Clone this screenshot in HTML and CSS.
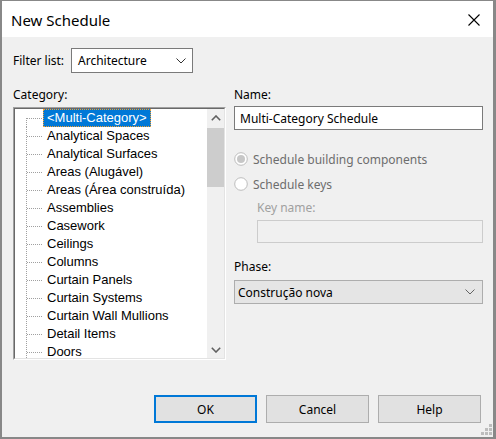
FILE: index.html
```html
<!DOCTYPE html>
<html>
<head>
<meta charset="utf-8">
<link rel="stylesheet" href="styles.css">
</head>
<body>
<div class="window">
  <div class="titlebar">
    <span class="title">New Schedule</span>
    <svg class="close" width="12" height="12" viewBox="0 0 12 12"><path d="M0.5 0.5 L11.5 11.5 M11.5 0.5 L0.5 11.5" stroke="#000" stroke-width="1.1" fill="none"/></svg>
  </div>
  <div class="content">
    <div class="filter-row">
      <span class="filter-label">Filter list:</span>
      <div class="combo combo-white">
        <span>Architecture</span>
        <svg class="chev" width="10" height="6" viewBox="0 0 10 6"><path d="M0.5 0.5 L5 5 L9.5 0.5" stroke="#333" stroke-width="1" fill="none"/></svg>
      </div>
    </div>
    <div class="columns">
      <div class="left">
        <div class="label">Category:</div>
        <div class="listbox">
          <div class="listbox-inner">
            <div class="tree">
              <div class="row first"><span class="item sel">&lt;Multi-Category&gt;</span></div>
              <div class="row"><span class="item">Analytical Spaces</span></div>
              <div class="row"><span class="item">Analytical Surfaces</span></div>
              <div class="row"><span class="item">Areas (Alugável)</span></div>
              <div class="row"><span class="item">Areas (Área construída)</span></div>
              <div class="row"><span class="item">Assemblies</span></div>
              <div class="row"><span class="item">Casework</span></div>
              <div class="row"><span class="item">Ceilings</span></div>
              <div class="row"><span class="item">Columns</span></div>
              <div class="row"><span class="item">Curtain Panels</span></div>
              <div class="row"><span class="item">Curtain Systems</span></div>
              <div class="row"><span class="item">Curtain Wall Mullions</span></div>
              <div class="row"><span class="item">Detail Items</span></div>
              <div class="row last"><span class="item">Doors</span></div>
            </div>
            <div class="scrollbar">
              <div class="sb-btn"><svg width="10" height="6" viewBox="0 0 10 6"><path d="M0.8 5.2 L5 1 L9.2 5.2" stroke="#606060" stroke-width="1.6" fill="none"/></svg></div>
              <div class="sb-track"><div class="sb-thumb"></div></div>
              <div class="sb-btn"><svg width="10" height="6" viewBox="0 0 10 6"><path d="M0.8 0.8 L5 5 L9.2 0.8" stroke="#606060" stroke-width="1.6" fill="none"/></svg></div>
            </div>
          </div>
        </div>
      </div>
      <div class="right">
        <div class="label name-label">Name:</div>
        <div class="textbox">Multi-Category Schedule</div>
        <div class="radio-row r1">
          <svg width="14" height="14" viewBox="0 0 14 14"><circle cx="7" cy="7" r="6.3" fill="#fff" stroke="#bcbcbc" stroke-width="1"/><circle cx="7" cy="7" r="4" fill="#c7c7c7"/></svg>
          <span>Schedule building components</span>
        </div>
        <div class="radio-row r2">
          <svg width="14" height="14" viewBox="0 0 14 14"><circle cx="7" cy="7" r="6.3" fill="#fff" stroke="#bcbcbc" stroke-width="1"/></svg>
          <span>Schedule keys</span>
        </div>
        <div class="keyblock">
          <div class="key-label">Key name:</div>
          <div class="keybox"></div>
        </div>
        <div class="label phase-label">Phase:</div>
        <div class="combo combo-gray">
          <span>Construção nova</span>
          <svg class="chev" width="10" height="6" viewBox="0 0 10 6"><path d="M0.5 0.5 L5 5 L9.5 0.5" stroke="#555" stroke-width="0.9" fill="none"/></svg>
        </div>
      </div>
    </div>
    <div class="buttons">
      <div class="btn default">OK</div>
      <div class="btn">Cancel</div>
      <div class="btn">Help</div>
    </div>
  </div>
  <svg class="grip" width="12" height="12" viewBox="0 0 12 12">
    <rect x="8" y="0" width="3" height="3" fill="#bdbdbd"/>
    <rect x="4" y="4" width="3" height="3" fill="#bdbdbd"/>
    <rect x="8" y="4" width="3" height="3" fill="#bdbdbd"/>
    <rect x="0" y="8" width="3" height="3" fill="#bdbdbd"/>
    <rect x="4" y="8" width="3" height="3" fill="#bdbdbd"/>
    <rect x="8" y="8" width="3" height="3" fill="#bdbdbd"/>
  </svg>
</div>
</body>
</html>
```
FILE: styles.css
```css
* { box-sizing: border-box; }
html, body { margin: 0; padding: 0; }
body {
  width: 496px;
  height: 439px;
  overflow: hidden;
  font-family: "Noto Sans", "Liberation Sans", sans-serif;
  font-size: 12px;
  color: #000;
}
.window {
  position: relative;
  width: 496px;
  height: 439px;
  background: #f0f0f0;
  border-style: solid;
  border-color: #888888;
  border-width: 1px 3px 2px 2px;
  display: flex;
  flex-direction: column;
}
.titlebar {
  height: 36px;
  background: #ffffff;
  display: flex;
  align-items: center;
  justify-content: space-between;
  padding: 0 13px 0 9px;
  flex: none;
}
.title {
  font-size: 15px;
  color: #000;
  margin-top: 1px;
}
.close { display: block; margin-top: 1px; }
.content {
  flex: 1;
  padding: 11px 10px 0 11px;
  display: flex;
  flex-direction: column;
}
.filter-row {
  display: flex;
  align-items: center;
  height: 25px;
}
.filter-label { width: 58px; }
.combo {
  height: 25px;
  display: flex;
  align-items: center;
  justify-content: space-between;
  border: 1px solid #7a7a7a;
}
.combo-white {
  width: 122px;
  background: #fff;
  padding: 0 6px 0 6px;
}
.combo-gray {
  width: 249px;
  height: 24px;
  background: #e5e5e5;
  border-color: #adadad;
  padding: 0 7px 0 3px;
  margin-top: 5px;
}
.chev { display: block; }
.columns {
  display: flex;
  gap: 8px;
  margin-top: 14px;
}
.left { width: 213px; }
.right { width: 249px; display: flex; flex-direction: column; }
.label { height: 20px; line-height: 16px; }
.name-label { height: 19px; }
.listbox {
  height: 253px;
  border: 1px solid;
  border-color: #a0a0a0 #ffffff #ffffff #a0a0a0;
}
.listbox-inner {
  height: 100%;
  border: 1px solid;
  border-color: #696969 #e3e3e3 #e3e3e3 #696969;
  background: #fff;
  display: flex;
  overflow: hidden;
}
.tree {
  flex: 1;
  font-family: "Liberation Sans", Arial, sans-serif;
  font-size: 13px;
  overflow: hidden;
}
.row {
  height: 18px;
  display: flex;
  align-items: center;
  padding-left: 28px;
  background-image:
    repeating-linear-gradient(to bottom, #a0a0a0 0 1px, transparent 1px 2px),
    repeating-linear-gradient(to right, #a0a0a0 0 1px, transparent 1px 2px);
  background-repeat: no-repeat;
  background-size: 1px 100%, 16px 1px;
  background-position: 11px 0, 12px 9px;
}
.row.first {
  background-size: 1px 9px, 16px 1px;
  background-position: 11px 9px, 12px 9px;
}
.row.last { height: 17px; align-items: flex-start; padding-top: 1px; background-position: 11px 0, 12px 9px; }
.item {
  padding: 0 3px;
  border: 1px dotted transparent;
  line-height: 16px;
  white-space: nowrap;
}
.row.last .item { line-height: 14px; }
.item.sel {
  background: #0078d7;
  color: #fff;
  border-color: #f5a030;
}
.scrollbar {
  width: 17px;
  flex: none;
  background: #f0f0f0;
  display: flex;
  flex-direction: column;
}
.sb-btn {
  height: 17px;
  display: flex;
  align-items: center;
  justify-content: center;
  flex: none;
}
.sb-btn svg { display: block; }
.sb-track { flex: 1; }
.sb-thumb {
  margin-top: 2px;
  height: 59px;
  background: #cdcdcd;
}
.textbox {
  height: 24px;
  border: 1px solid #7a7a7a;
  background: #fff;
  padding: 0 5px;
  display: flex;
  align-items: center;
}
.radio-row {
  display: flex;
  align-items: center;
  height: 16px;
  gap: 5px;
  color: #6d6d6d;
}
.radio-row svg { display: block; }
.r1 { margin-top: 21px; }
.r2 { margin-top: 9px; }
.keyblock { padding-left: 23px; }
.key-label {
  margin-top: 8px;
  height: 16px;
  line-height: 16px;
  color: #a0a0a0;
}
.keybox {
  margin-top: 4px;
  height: 23px;
  border: 1px solid #cccccc;
  background: #f0f0f0;
}
.phase-label { margin-top: 16px; height: 16px; }
.buttons {
  display: flex;
  justify-content: flex-end;
  gap: 9px;
  margin-top: 35px;
  padding-right: 2px;
}
.btn {
  width: 103px;
  height: 28px;
  background: #e1e1e1;
  border: 1px solid #adadad;
  display: flex;
  align-items: center;
  justify-content: center;
}
.btn.default { border: 2px solid #0078d7; }
.grip {
  position: absolute;
  right: 0;
  bottom: 1px;
}
```
